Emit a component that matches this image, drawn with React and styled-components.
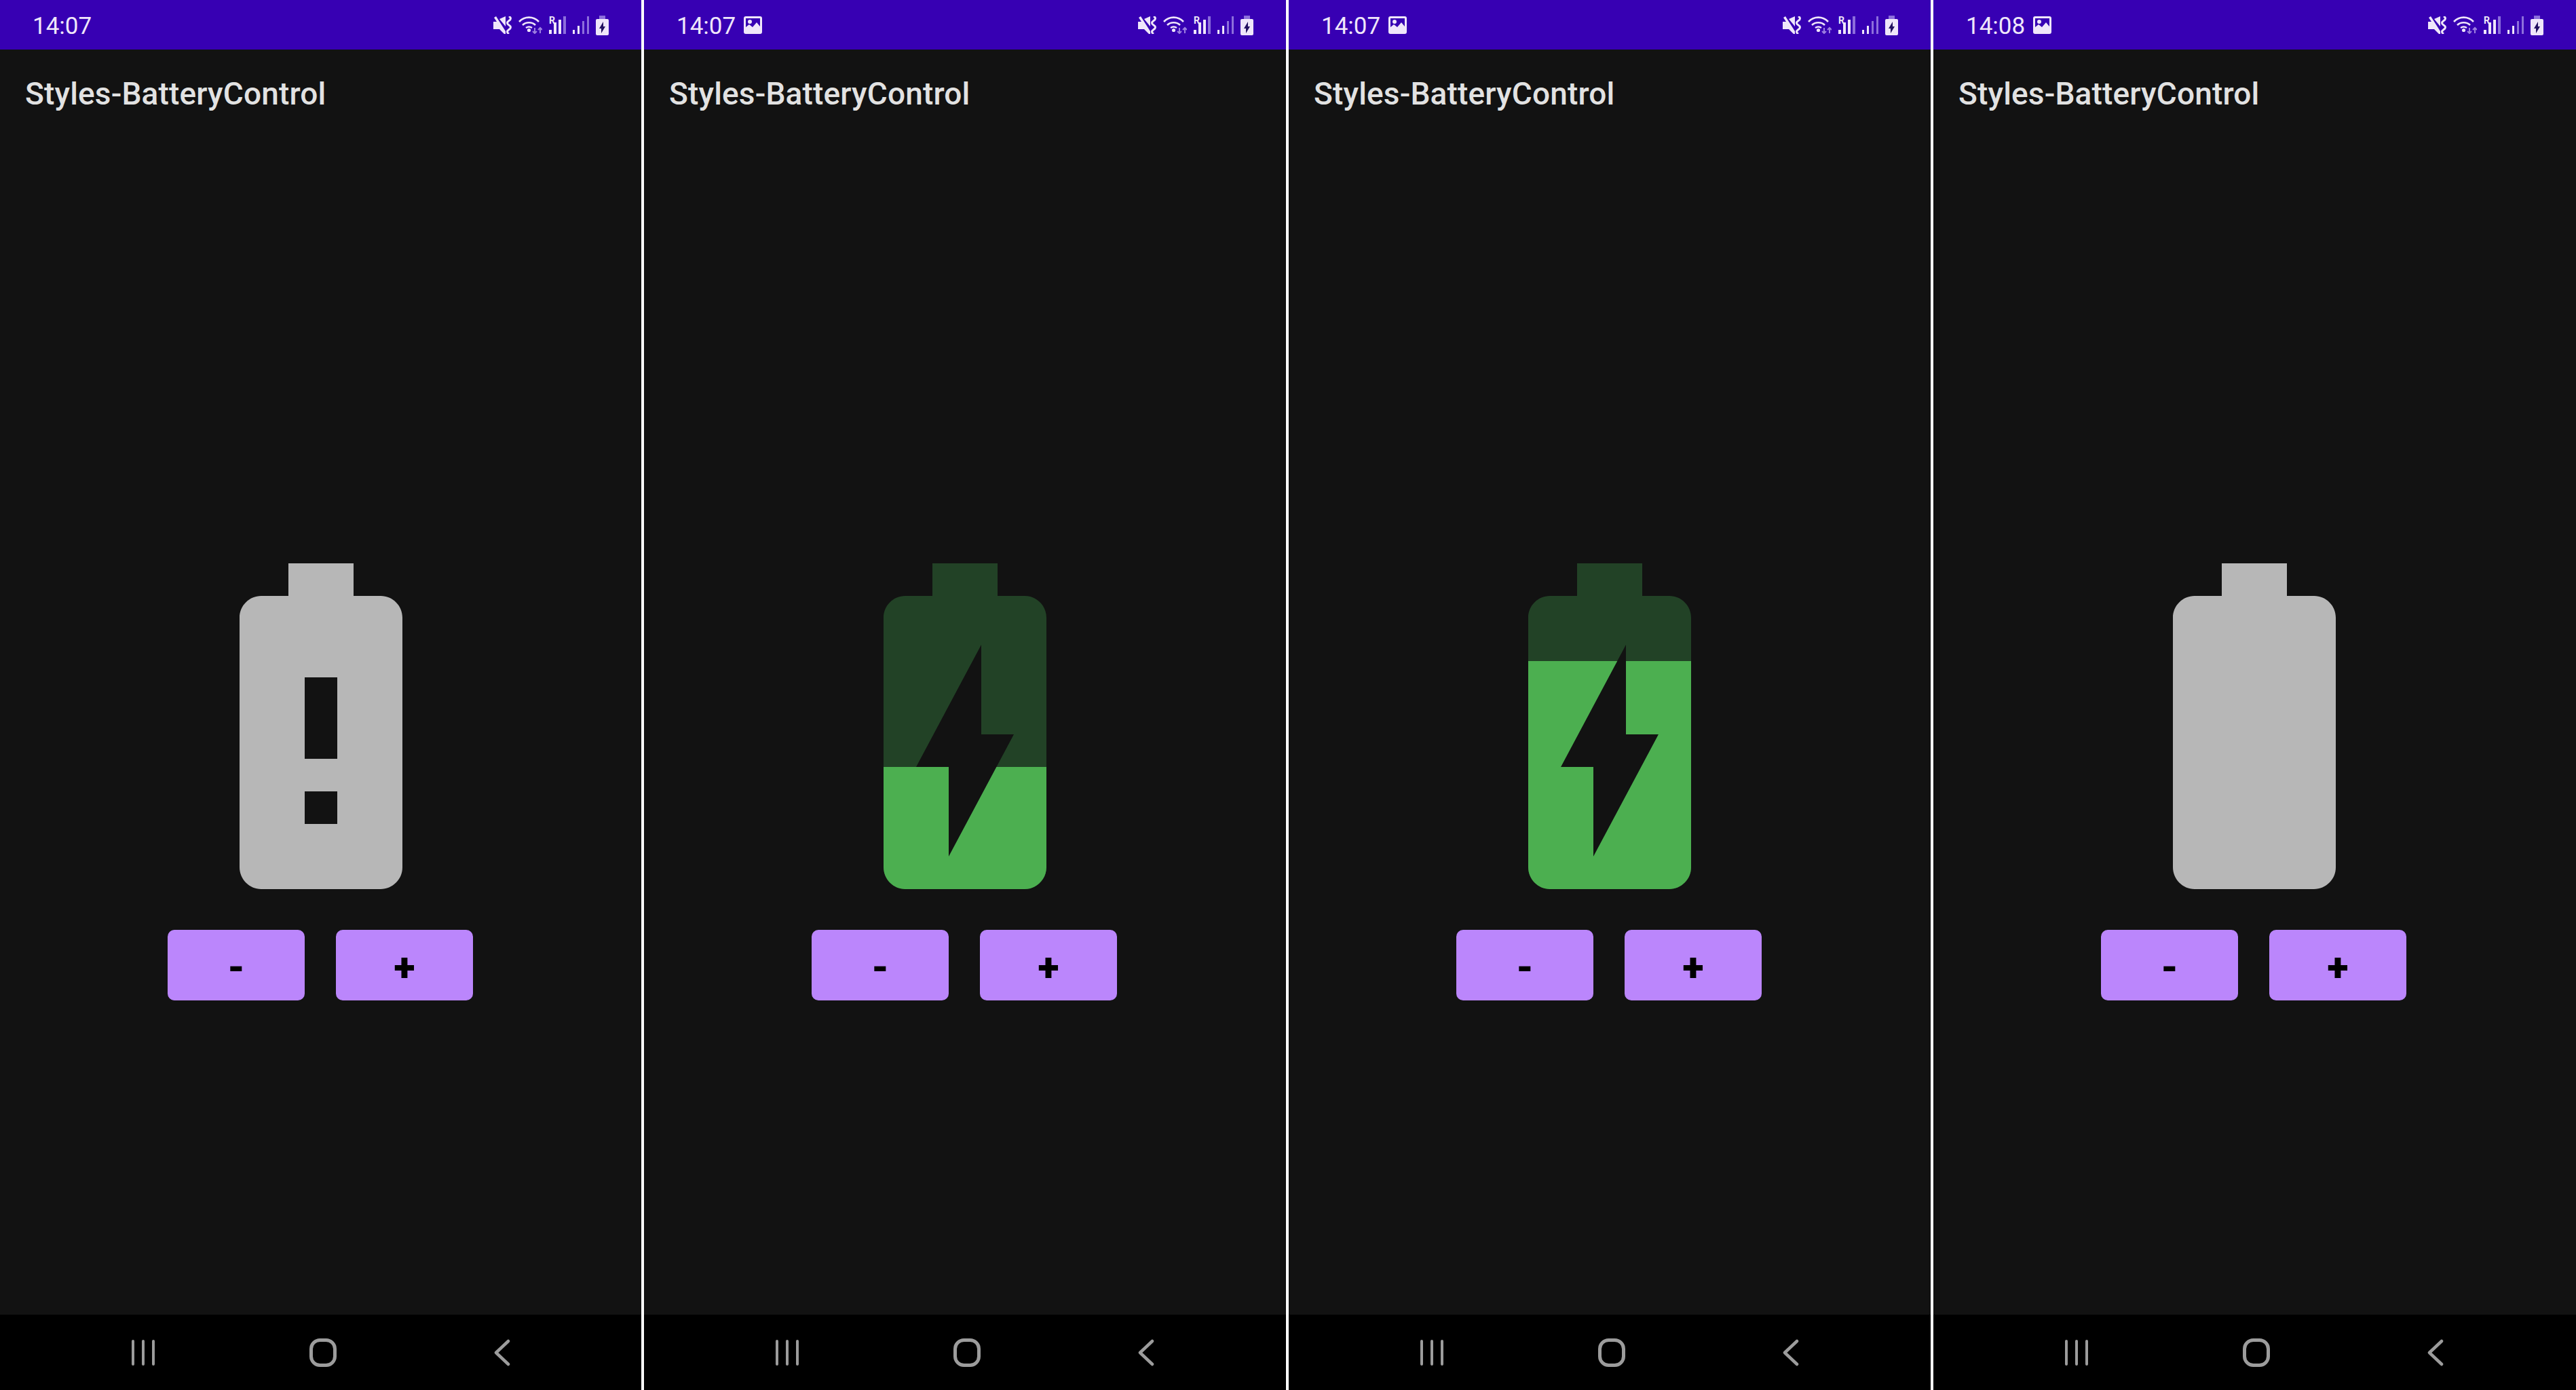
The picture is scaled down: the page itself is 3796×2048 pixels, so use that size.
import React from "react";
import styled, { createGlobalStyle } from "styled-components";

const BODY_PATH =
  "M15.67 4H14V2h-4v2H8.33C7.6 4 7 4.6 7 5.33v15.33C7 21.4 7.6 22 8.33 22h7.33c.74 0 1.34-.6 1.34-1.33V5.33C17 4.6 16.4 4 15.67 4z";
const ALERT_PATH = "M13 18h-2v-2h2v2zm0-4h-2V9h2v5z";
const BOLT_PATH = "M11 20v-5.5H9L13 7v5.5h2L11 20z";

const PHONES = [
  { time: "14:07", state: "alert" },
  { time: "14:07", state: "charging", level: 14.5, hasPicture: true },
  { time: "14:07", state: "charging", level: 8, hasPicture: true },
  { time: "14:08", state: "empty", hasPicture: true },
];

function BatteryImage({ state, level, index }) {
  if (state === "charging") {
    const clipId = `battery-level-${index}`;
    const path = `${BODY_PATH}${BOLT_PATH}`;
    return (
      <BatterySvg viewBox="0 0 24 24">
        <defs>
          <clipPath id={clipId}>
            <rect x="0" y={level} width="24" height={24 - level} />
          </clipPath>
        </defs>
        <path d={path} fill="#224226" fillRule="evenodd" />
        <path
          d={path}
          fill="#4caf50"
          fillRule="evenodd"
          clipPath={`url(#${clipId})`}
        />
      </BatterySvg>
    );
  }
  return (
    <BatterySvg viewBox="0 0 24 24">
      <path
        d={state === "alert" ? `${BODY_PATH}${ALERT_PATH}` : BODY_PATH}
        fill="#b7b7b7"
        fillRule="evenodd"
      />
    </BatterySvg>
  );
}

function PictureIcon() {
  return (
    <StatusSvg width="27" height="26" viewBox="0 0 27 26">
      <path
        fillRule="evenodd"
        d="M3 0h21a3 3 0 0 1 3 3v20a3 3 0 0 1-3 3H3a3 3 0 0 1-3-3V3a3 3 0 0 1 3-3zM3 3v13l5-4 5 4 6-7 5 6V3H3zm6 2a3 3 0 1 1 0 6 3 3 0 0 1 0-6z"
        fill="#efe6fa"
      />
    </StatusSvg>
  );
}

function MuteIcon() {
  return (
    <StatusSvg width="27" height="26" viewBox="0 0 27 26">
      <path d="M0 8h5L1 2l3-2 14 22v4h-2l-7-7H0z" fill="#efe6fa" />
      <path d="M9 4l9-4v15z" fill="#efe6fa" />
      <path
        d="M23 0q5 3 0 6.500t0 6.500 0 6.500 0 6.500"
        fill="none"
        stroke="#efe6fa"
        strokeWidth="3"
      />
    </StatusSvg>
  );
}

function WifiIcon() {
  return (
    <StatusSvg width="35" height="26" viewBox="0 0 35 26">
      <g fill="none" stroke="#efe6fa" strokeWidth="2.6">
        <path d="M1 8c8-8.500 21-8.500 29 0" />
        <path d="M6 13c5-5 14-5 19 0" />
        <path d="M11 17c3-2 6-2 9 0" />
      </g>
      <circle cx="15.500" cy="20.500" r="2.600" fill="#efe6fa" />
      <path
        d="M24 17v8m-3-3l3 3 3-3M32 25v-8m-3 3l3-3 3 3"
        fill="none"
        stroke="#9e80e0"
        strokeWidth="2"
      />
    </StatusSvg>
  );
}

function SignalIcon({ strong, showRoaming }) {
  const heights = showRoaming ? [6, 17, 21, 26] : [6, 12, 19, 26];
  return (
    <SignalBox>
      {showRoaming && <RoamingMark>R</RoamingMark>}
      {heights.map((height, i) => (
        <SignalBar key={i} $lit={i < strong} style={{ height }} />
      ))}
    </SignalBox>
  );
}

function SmallBattery() {
  return (
    <StatusSvg $raised width="19" height="29" viewBox="0 0 19 29">
      <path d="M5 0h9v5H5z" fill="#8d6fdc" />
      <rect y="5" width="19" height="24" rx="2" fill="#efe6fa" />
      <path d="M8 26v-7H5l6-10v7h3z" fill="#221060" />
    </StatusSvg>
  );
}

function NavIcons() {
  return (
    <NavBar>
      <svg width="36" height="40" viewBox="0 0 36 40">
        <g stroke="#9c9c9c" strokeWidth="4" strokeLinecap="round">
          <path d="M3 3v34M18 3v34M33 3v34" />
        </g>
      </svg>
      <svg width="40" height="42" viewBox="0 0 40 42">
        <rect
          x="2.500"
          y="2.500"
          width="35"
          height="37"
          rx="13"
          fill="none"
          stroke="#9c9c9c"
          strokeWidth="5"
        />
      </svg>
      <svg width="24" height="40" viewBox="0 0 24 40">
        <path
          d="M21 3L3 20l18 17"
          fill="none"
          stroke="#9c9c9c"
          strokeWidth="4.500"
          strokeLinecap="round"
          strokeLinejoin="round"
        />
      </svg>
    </NavBar>
  );
}

function Phone({ time, state, level, hasPicture, index }) {
  return (
    <Screen>
      <StatusBar>
        <Clock>{time}</Clock>
        {hasPicture && <PictureIcon />}
        <StatusIcons>
          <MuteIcon />
          <WifiIcon />
          <SignalIcon strong={3} showRoaming />
          <SignalIcon strong={2} />
          <SmallBattery />
        </StatusIcons>
      </StatusBar>
      <Toolbar>Styles-BatteryControl</Toolbar>
      <Content>
        <BatteryImage state={state} level={level} index={index} />
        <Buttons>
          <ActionButton>-</ActionButton>
          <ActionButton>+</ActionButton>
        </Buttons>
      </Content>
      <NavIcons />
    </Screen>
  );
}

export default function App() {
  return (
    <>
      <GlobalStyle />
      <Gallery>
        {PHONES.map((phone, i) => (
          <Phone key={i} index={i} {...phone} />
        ))}
      </Gallery>
    </>
  );
}

const GlobalStyle = createGlobalStyle`
  html, body {
    margin: 0;
    padding: 0;
    background: #fff;
  }
  body {
    font-family: Roboto, "Liberation Sans", sans-serif;
    overflow: hidden;
  }
`;

const Gallery = styled.div`
  display: grid;
  grid-template-columns: 945px 946px 946px 947px;
  column-gap: 4px;
  width: 3796px;
  height: 2048px;
  background: #fff;
`;

const Screen = styled.div`
  display: flex;
  flex-direction: column;
  height: 2048px;
  background: #121212;
`;

const StatusBar = styled.div`
  display: flex;
  align-items: center;
  box-sizing: border-box;
  height: 73px;
  padding: 0 48px 0 48px;
  background: #3700b3;
`;

const Clock = styled.span`
  color: #efe6fa;
  font-size: 35px;
  line-height: 73px;
  padding-top: 4px;
  margin-right: 12px;
`;

const StatusSvg = styled.svg`
  display: block;
  flex: none;
  margin-top: ${({ $raised }) => ($raised ? "1px" : "0")};
`;

const StatusIcons = styled.div`
  display: flex;
  align-items: center;
  gap: 10px;
  margin-left: auto;
`;

const SignalBox = styled.div`
  position: relative;
  display: flex;
  align-items: flex-end;
  gap: 3.5px;
  height: 26px;
`;

const SignalBar = styled.i`
  display: block;
  width: 3.5px;
  background: ${({ $lit }) => ($lit ? "#efe6fa" : "#8d6fdc")};
`;

const RoamingMark = styled.span`
  position: absolute;
  top: -2px;
  left: 0;
  color: #efe6fa;
  font-size: 14px;
  font-weight: 700;
  line-height: 16px;
`;

const Toolbar = styled.div`
  box-sizing: border-box;
  height: 130px;
  padding: 36px 0 0 37px;
  color: #e2e2e2;
  font-size: 46px;
  font-weight: 500;
  letter-spacing: 0.15px;
  line-height: 58px;
`;

const Content = styled.main`
  flex: 1;
  display: flex;
  flex-direction: column;
  align-items: center;
  width: 946px;
  padding-top: 579px;
`;

const BatterySvg = styled.svg`
  display: block;
  width: 576px;
  height: 576px;
`;

const Buttons = styled.div`
  display: flex;
  gap: 46px;
  margin: 12px 2px 0 0;
`;

const ActionButton = styled.button`
  width: 202px;
  height: 104px;
  padding: 5px 0 0;
  border: none;
  border-radius: 10px;
  background: #bb86fc;
  color: #000;
  font-family: inherit;
  font-size: 58px;
  font-weight: 900;
  line-height: 1;
`;

const NavBar = styled.div`
  display: grid;
  grid-template-columns: repeat(3, 264.5px);
  justify-items: center;
  align-items: center;
  box-sizing: border-box;
  height: 111px;
  padding: 0 0 0 79px;
  background: #000;
`;
